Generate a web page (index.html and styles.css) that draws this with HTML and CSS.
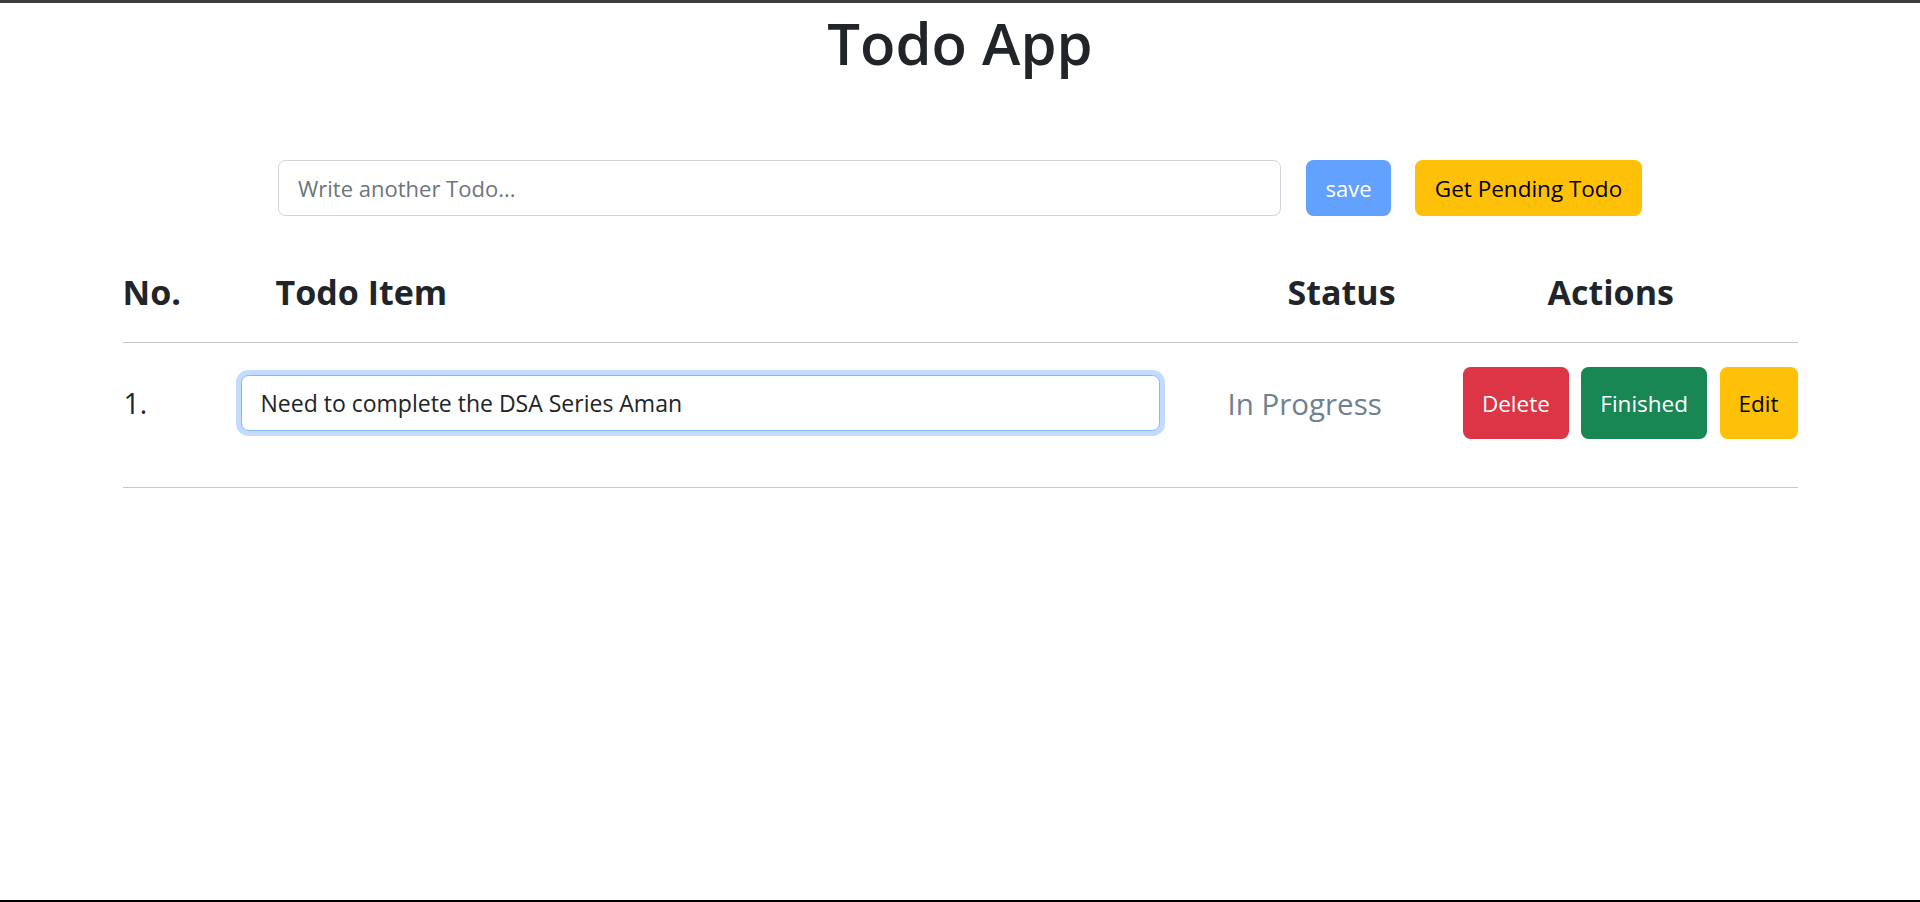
FILE: index.html
```html
<!DOCTYPE html>
<html lang="en">
<head>
<meta charset="utf-8">
<title>Todo App</title>
<link rel="stylesheet" href="styles.css">
</head>
<body>
<div class="page">
  <div class="topbar"></div>
  <h1 class="title">Todo App</h1>
  <div class="add-row">
    <input class="add-input" type="text" placeholder="Write another Todo...">
    <button class="btn btn-save">save</button>
    <button class="btn btn-pending">Get Pending Todo</button>
  </div>
  <div class="todo-table">
    <div class="grid head-row">
      <div class="h-no">No.</div>
      <div class="h-item">Todo Item</div>
      <div class="h-status">Status</div>
      <div class="h-actions">Actions</div>
    </div>
    <div class="grid body-row">
      <div class="c-no">1.</div>
      <div class="c-item"><input class="item-input" type="text" value="Need to complete the DSA Series Aman"></div>
      <div class="c-status">In Progress</div>
      <div class="c-actions">
        <button class="btn btn-act btn-delete">Delete</button>
        <button class="btn btn-act btn-finished">Finished</button>
        <button class="btn btn-act btn-edit">Edit</button>
      </div>
    </div>
  </div>
  <div class="spacer"></div>
  <div class="bottombar"></div>
</div>
</body>
</html>
```

FILE: styles.css
```css
* { box-sizing: border-box; }
html, body { margin: 0; padding: 0; }
body {
  font-family: "Open Sans", "Noto Sans", sans-serif;
  color: #212529;
  background: #fff;
}
.page {
  height: 100vh;
  display: flex;
  flex-direction: column;
}
.topbar { height: 3px; background: #3c3c3c; flex: none; }
.bottombar { height: 2px; background: #000; flex: none; }
.spacer { flex: 1; }

.title {
  margin: 0;
  font-size: 58px;
  font-weight: 600;
  line-height: 80px;
  text-align: center;
  color: #212529;
}

.add-row {
  margin-top: 77px;
  display: flex;
  justify-content: center;
  align-items: center;
}
.add-input {
  width: 1003px;
  height: 56px;
  border: 1.25px solid #ced4da;
  border-radius: 7.5px;
  padding: 0 19px;
  font-family: inherit;
  font-size: 22px;
  color: #212529;
  outline: none;
}
.add-input::placeholder { color: #6c757d; }

.btn {
  font-family: inherit;
  border: none;
  border-radius: 7.5px;
  cursor: pointer;
}
.btn-save {
  margin-left: 25px;
  width: 85px;
  height: 56px;
  background: #62a1fe;
  color: #fff;
  font-size: 22px;
}
.btn-pending {
  margin-left: 24px;
  width: 227px;
  height: 56px;
  background: #ffc107;
  color: #000;
  font-size: 22.5px;
  padding: 0;
}

.todo-table {
  width: 1675px;
  margin: 0 auto;
}
.grid {
  display: grid;
  grid-template-columns: 113px 955px 250px 357px;
  align-items: center;
}
.head-row {
  height: 127px;
  border-bottom: 1.25px solid #c8c8c8;
  font-size: 34px;
  font-weight: 700;
  padding-top: 26px;
}
.h-no { padding-left: 0; }
.h-item { padding-left: 40px; }
.h-status { padding-left: 97px; }
.h-actions { padding-left: 107px; }

.body-row {
  padding-top: 24px;
  padding-bottom: 48px;
  border-bottom: 1.25px solid #c8c8c8;
}
.c-no { padding-left: 1px; font-size: 28.5px; }
.c-item { padding-left: 5px; }
.item-input {
  width: 919px;
  height: 56px;
  border: 1.25px solid #86b7fe;
  border-radius: 7.5px;
  box-shadow: 0 0 0 5px rgba(13, 110, 253, 0.25);
  padding: 0 19px;
  font-family: inherit;
  font-size: 23px;
  color: #212529;
  outline: none;
}
.c-status {
  padding-left: 37px;
  font-size: 29.5px;
  color: #708090;
}
.c-actions {
  display: flex;
  justify-content: flex-end;
  gap: 12.5px;
}
.btn-act {
  height: 72px;
  padding: 0 19px;
  font-size: 22.5px;
}
.btn-delete { background: #dc3545; color: #fff; }
.btn-finished { background: #198754; color: #fff; }
.btn-edit { background: #ffc107; color: #000; }
```
